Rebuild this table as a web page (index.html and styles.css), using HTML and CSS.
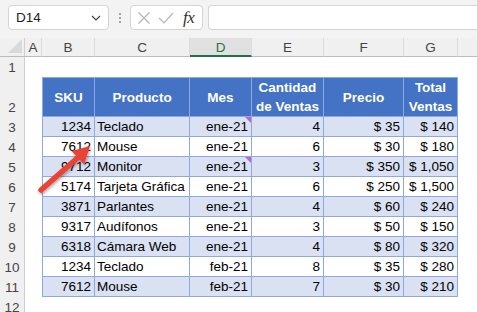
FILE: index.html
```html
<!DOCTYPE html>
<html>
<head>
<meta charset="utf-8">
<link rel="stylesheet" href="styles.css">
</head>
<body>
<div class="app">
  <div class="topbar">
    <div class="namebox">
      <span class="nb-text">D14</span>
      <svg class="chev" width="10" height="6" viewBox="0 0 10 6"><path d="M1 1 L5 5 L9 1" fill="none" stroke="#444" stroke-width="1.2"/></svg>
    </div>
    <div class="dots"><span></span><span></span><span></span></div>
    <div class="fxbox">
      <svg width="14" height="14" viewBox="0 0 14 14"><path d="M1.5 1.5 L12.5 12.5 M12.5 1.5 L1.5 12.5" stroke="#b5b5b5" stroke-width="1.2" fill="none"/></svg>
      <svg width="16" height="12" viewBox="0 0 16 12"><path d="M1 6 L6 11 L15 1" stroke="#b5b5b5" stroke-width="1.2" fill="none"/></svg>
      <span class="fx">fx</span>
    </div>
    <div class="formula"></div>
  </div>
  <div class="sheet">
    <div class="corner"><svg width="14" height="14" viewBox="0 0 14 14"><path d="M14 0 L14 14 L0 14 Z" fill="#d9d9d9"/></svg></div>
    <div class="ch">A</div><div class="ch">B</div><div class="ch">C</div><div class="ch sel">D</div><div class="ch">E</div><div class="ch">F</div><div class="ch">G</div><div class="ch last"></div>

    <div class="rh">1</div><div class="blank span8"></div>

    <div class="rh">2</div><div class="blank"></div>
    <div class="th first">SKU</div><div class="th">Producto</div><div class="th">Mes</div><div class="th">Cantidad de Ventas</div><div class="th">Precio</div><div class="th">Total Ventas</div><div class="blank"></div>

    <div class="rh">3</div><div class="blank"></div>
    <div class="td band first r">1234</div><div class="td band">Teclado</div><div class="td band r note">ene-21</div><div class="td band r">4</div><div class="td band r">$ 35</div><div class="td band r">$ 140</div><div class="blank"></div>

    <div class="rh">4</div><div class="blank"></div>
    <div class="td first r">7612</div><div class="td">Mouse</div><div class="td r">ene-21</div><div class="td r">6</div><div class="td r">$ 30</div><div class="td r">$ 180</div><div class="blank"></div>

    <div class="rh">5</div><div class="blank"></div>
    <div class="td band first r">9712</div><div class="td band">Monitor</div><div class="td band r note">ene-21</div><div class="td band r">3</div><div class="td band r">$ 350</div><div class="td band r">$ 1,050</div><div class="blank"></div>

    <div class="rh">6</div><div class="blank"></div>
    <div class="td first r">5174</div><div class="td">Tarjeta Gráfica</div><div class="td r">ene-21</div><div class="td r">6</div><div class="td r">$ 250</div><div class="td r">$ 1,500</div><div class="blank"></div>

    <div class="rh">7</div><div class="blank"></div>
    <div class="td band first r">3871</div><div class="td band">Parlantes</div><div class="td band r">ene-21</div><div class="td band r">4</div><div class="td band r">$ 60</div><div class="td band r">$ 240</div><div class="blank"></div>

    <div class="rh">8</div><div class="blank"></div>
    <div class="td first r">9317</div><div class="td">Audífonos</div><div class="td r">ene-21</div><div class="td r">3</div><div class="td r">$ 50</div><div class="td r">$ 150</div><div class="blank"></div>

    <div class="rh">9</div><div class="blank"></div>
    <div class="td band first r">6318</div><div class="td band">Cámara Web</div><div class="td band r">ene-21</div><div class="td band r">4</div><div class="td band r">$ 80</div><div class="td band r">$ 320</div><div class="blank"></div>

    <div class="rh">10</div><div class="blank"></div>
    <div class="td first r">1234</div><div class="td">Teclado</div><div class="td r">feb-21</div><div class="td r">8</div><div class="td r">$ 35</div><div class="td r">$ 280</div><div class="blank"></div>

    <div class="rh">11</div><div class="blank"></div>
    <div class="td band first r">7612</div><div class="td band">Mouse</div><div class="td band r">feb-21</div><div class="td band r">7</div><div class="td band r">$ 30</div><div class="td band r">$ 210</div><div class="blank"></div>

    <div class="rh">12</div><div class="blank span8"></div>
  </div>
  <svg class="arrow" width="477" height="312" viewBox="0 0 477 312">
    <defs>
      <filter id="sh" x="-20%" y="-20%" width="140%" height="140%">
        <feDropShadow dx="1" dy="1.5" stdDeviation="1.5" flood-color="#000" flood-opacity="0.35"/>
      </filter>
    </defs>
    <g filter="url(#sh)">
      <line x1="41" y1="190" x2="78" y2="157.5" stroke="#ea4335" stroke-width="5.5" stroke-linecap="round"/>
      <path d="M90 146 L84 164.5 L71.5 151 Z" fill="#ea4335"/>
    </g>
  </svg>
</div>
</body>
</html>
```

FILE: styles.css
```css
html, body {
  margin: 0;
  padding: 0;
  width: 477px;
  height: 312px;
  overflow: hidden;
  background: #ffffff;
}
.app {
  position: relative;
  width: 477px;
  height: 312px;
  overflow: hidden;
  font-family: "Liberation Sans", Arial, sans-serif;
}
.topbar {
  height: 38px;
  background: #f3f3f3;
  display: flex;
  align-items: flex-start;
  padding: 5px 0 0 8px;
  box-sizing: border-box;
}
.namebox {
  width: 101px;
  height: 25px;
  box-sizing: border-box;
  background: #fff;
  border: 1px solid #d4d4d4;
  border-radius: 4px;
  display: flex;
  align-items: center;
  justify-content: space-between;
  padding: 0 7px 0 7px;
  font-size: 13.5px;
  color: #222;
}
.chev { margin-top: 1px; }
.dots {
  width: 21px;
  height: 25px;
  display: flex;
  flex-direction: column;
  align-items: center;
  justify-content: center;
  gap: 2px;
}
.dots span {
  width: 2px;
  height: 2px;
  background: #8a8a8a;
  border-radius: 1px;
}
.fxbox {
  width: 73px;
  height: 25px;
  box-sizing: border-box;
  background: #fff;
  border: 1px solid #d4d4d4;
  border-radius: 4px;
  display: flex;
  align-items: center;
  padding: 0 0 0 6px;
  gap: 7px;
}
.fx {
  font-family: "Liberation Serif", "Times New Roman", serif;
  font-style: italic;
  font-size: 17px;
  color: #333;
  margin-left: 2px;
  letter-spacing: -0.5px;
}
.formula {
  flex: 1;
  margin-left: 5px;
  height: 25px;
  box-sizing: border-box;
  background: #fff;
  border: 1px solid #d4d4d4;
  border-right: none;
  border-radius: 4px 0 0 4px;
}
.sheet {
  display: grid;
  grid-template-columns: 25px 17px 53px 95px 62px 72px 80px 54px 1fr;
  grid-template-rows: 19px 20px 40px repeat(10, 20px);
  font-size: 13.5px;
  color: #000;
}
.corner {
  background: #f0f0f0;
  border-right: 1px solid #cfcfcf;
  border-bottom: 1px solid #bcbcbc;
  box-sizing: border-box;
  display: flex;
  align-items: flex-end;
  justify-content: flex-end;
  padding: 0 2px 3px 0;
}
.ch {
  background: #f0f0f0;
  border-bottom: 1px solid #bcbcbc;
  border-right: 1px solid #dadada;
  box-sizing: border-box;
  display: flex;
  align-items: center;
  justify-content: center;
  font-size: 13.5px;
  color: #444;
  padding-top: 1px;
}
.ch.sel {
  background: #e1e1e1;
  border-bottom: 2px solid #217346;
  color: #217346;
}
.ch.last { border-right: none; }
.rh {
  background: #f0f0f0;
  border-right: 1px solid #cfcfcf;
  box-sizing: border-box;
  display: flex;
  align-items: flex-end;
  justify-content: center;
  padding-bottom: 2px;
  font-size: 13.5px;
  color: #444;
}
.blank { background: #fff; }
.span8 { grid-column: span 8; }
.th {
  background: #4472c4;
  color: #fff;
  font-weight: bold;
  text-align: center;
  display: flex;
  align-items: center;
  justify-content: center;
  line-height: 19px;
  border-right: 1px solid #8ea9db;
  border-bottom: 1px solid #8ea9db;
  border-top: 1px solid #8ea9db;
  box-sizing: border-box;
  padding: 0 2px;
}
.th.first, .td.first { border-left: 1px solid #8ea9db; }
.td {
  background: #fff;
  border-right: 1px solid #8ea9db;
  border-bottom: 1px solid #8ea9db;
  box-sizing: border-box;
  display: flex;
  align-items: center;
  padding: 0 3px 0 2px;
  white-space: nowrap;
  position: relative;
}
.td.band { background: #d9e1f2; }
.td.r { justify-content: flex-end; }
.td.note::after {
  content: "";
  position: absolute;
  top: 0;
  right: 0;
  width: 0;
  height: 0;
  border-top: 6px solid #b865d0;
  border-left: 6px solid transparent;
}
.arrow {
  position: absolute;
  left: 0;
  top: 0;
  pointer-events: none;
}
```
